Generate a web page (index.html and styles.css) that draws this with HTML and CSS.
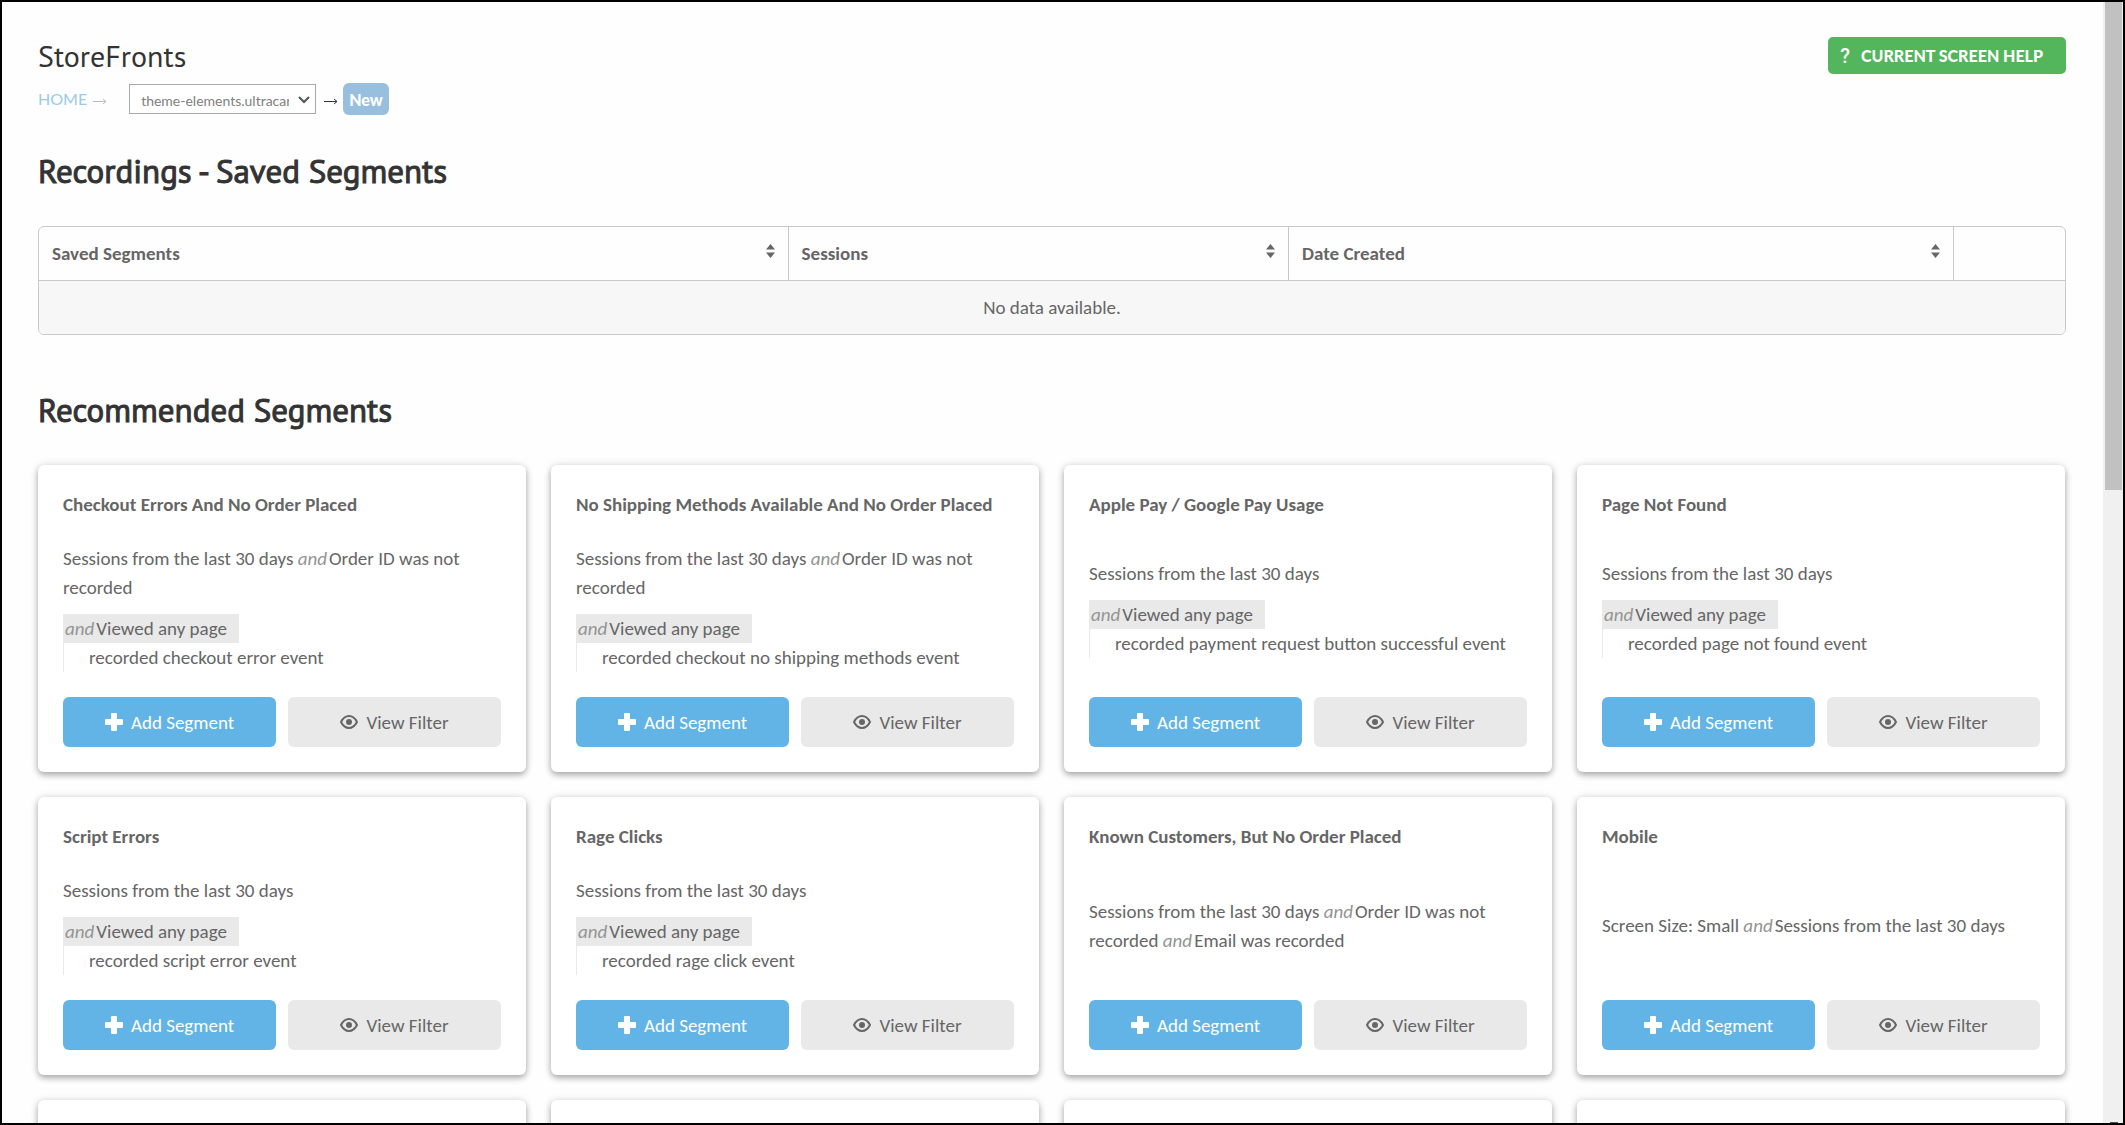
FILE: index.html
```html
<!DOCTYPE html>
<html lang="en">
<head>
<meta charset="utf-8">
<title>StoreFronts</title>
<link rel="stylesheet" href="styles.css">
</head>
<body>
<svg class="sprite" aria-hidden="true">
  <symbol id="plus" viewBox="0 0 18 18"><path d="M7 0h4a1 1 0 0 1 1 1v5h5a1 1 0 0 1 1 1v4a1 1 0 0 1-1 1h-5v5a1 1 0 0 1-1 1H7a1 1 0 0 1-1-1v-5H1a1 1 0 0 1-1-1V7a1 1 0 0 1 1-1h5V1a1 1 0 0 1 1-1z"/></symbol>
  <symbol id="eye" viewBox="0 0 18 14"><path d="M1 7C3 3 5.700 1 9 1s6 2 8 6c-2 4-4.700 6-8 6S3 11 1 7z" fill="none" stroke="currentColor" stroke-width="2" stroke-linejoin="round"/><circle cx="9" cy="7" r="3"/></symbol>
  <symbol id="sort" viewBox="0 0 9 14"><path d="M0 5.500 4.500 0 9 5.500zM0 8.500h9L4.500 14z"/></symbol>
  <symbol id="arrow" viewBox="0 0 14 8"><path d="M0 4.500h13M10 2l3 2.500L10 7" fill="none" stroke="currentColor"/></symbol>
</svg>
<div class="frame">
  <main class="page">
    <header class="top">
      <div>
        <h1 class="page-title">StoreFronts</h1>
        <nav class="crumbs" aria-label="Breadcrumb">
          <a class="crumb-home" href="#">HOME</a>
          <svg class="arrow arrow-light"><use href="#arrow"/></svg>
          <span class="store">
            <select class="store-select" aria-label="StoreFront"><option>theme-elements.ultracartstore.com</option></select>
            <svg class="store-chevron" viewBox="0 0 12 8"><path d="M1 1l5 5 5-5" fill="none" stroke="currentColor" stroke-width="2"/></svg>
          </span>
          <svg class="arrow"><use href="#arrow"/></svg>
          <a class="crumb-new" href="#">New</a>
        </nav>
      </div>
      <button class="help" type="button"><span class="help-mark">?</span>CURRENT SCREEN HELP</button>
    </header>

    <h2 class="section-title">Recordings - Saved Segments</h2>
    <table class="segments">
      <colgroup><col class="col-name"><col class="col-sessions"><col class="col-date"><col></colgroup>
      <thead>
        <tr>
          <th scope="col"><span class="th">Saved Segments<svg class="sort"><use href="#sort"/></svg></span></th>
          <th scope="col"><span class="th">Sessions<svg class="sort"><use href="#sort"/></svg></span></th>
          <th scope="col"><span class="th">Date Created<svg class="sort"><use href="#sort"/></svg></span></th>
          <td></td>
        </tr>
      </thead>
      <tbody><tr><td class="empty" colspan="4">No data available.</td></tr></tbody>
    </table>

    <h2 class="section-title">Recommended Segments</h2>
    <section class="cards">
      <article class="card">
        <h3 class="card-title">Checkout Errors And No Order Placed</h3>
        <div class="card-body">
          <p>Sessions from the last 30 days <em>and</em>Order ID was not recorded</p>
          <div class="event"><p class="event-page"><em>and</em>Viewed any page</p><p class="event-detail">recorded checkout error event</p></div>
        </div>
        <div class="actions"><button class="btn btn-add" type="button"><svg class="plus"><use href="#plus"/></svg>Add Segment</button><button class="btn" type="button"><svg class="eye"><use href="#eye"/></svg>View Filter</button></div>
      </article>
      <article class="card">
        <h3 class="card-title">No Shipping Methods Available And No Order Placed</h3>
        <div class="card-body">
          <p>Sessions from the last 30 days <em>and</em>Order ID was not recorded</p>
          <div class="event"><p class="event-page"><em>and</em>Viewed any page</p><p class="event-detail">recorded checkout no shipping methods event</p></div>
        </div>
        <div class="actions"><button class="btn btn-add" type="button"><svg class="plus"><use href="#plus"/></svg>Add Segment</button><button class="btn" type="button"><svg class="eye"><use href="#eye"/></svg>View Filter</button></div>
      </article>
      <article class="card">
        <h3 class="card-title">Apple Pay / Google Pay Usage</h3>
        <div class="card-body">
          <p>Sessions from the last 30 days</p>
          <div class="event"><p class="event-page"><em>and</em>Viewed any page</p><p class="event-detail">recorded payment request button successful event</p></div>
        </div>
        <div class="actions"><button class="btn btn-add" type="button"><svg class="plus"><use href="#plus"/></svg>Add Segment</button><button class="btn" type="button"><svg class="eye"><use href="#eye"/></svg>View Filter</button></div>
      </article>
      <article class="card">
        <h3 class="card-title">Page Not Found</h3>
        <div class="card-body">
          <p>Sessions from the last 30 days</p>
          <div class="event"><p class="event-page"><em>and</em>Viewed any page</p><p class="event-detail">recorded page not found event</p></div>
        </div>
        <div class="actions"><button class="btn btn-add" type="button"><svg class="plus"><use href="#plus"/></svg>Add Segment</button><button class="btn" type="button"><svg class="eye"><use href="#eye"/></svg>View Filter</button></div>
      </article>
      <article class="card">
        <h3 class="card-title">Script Errors</h3>
        <div class="card-body">
          <p>Sessions from the last 30 days</p>
          <div class="event"><p class="event-page"><em>and</em>Viewed any page</p><p class="event-detail">recorded script error event</p></div>
        </div>
        <div class="actions"><button class="btn btn-add" type="button"><svg class="plus"><use href="#plus"/></svg>Add Segment</button><button class="btn" type="button"><svg class="eye"><use href="#eye"/></svg>View Filter</button></div>
      </article>
      <article class="card">
        <h3 class="card-title">Rage Clicks</h3>
        <div class="card-body">
          <p>Sessions from the last 30 days</p>
          <div class="event"><p class="event-page"><em>and</em>Viewed any page</p><p class="event-detail">recorded rage click event</p></div>
        </div>
        <div class="actions"><button class="btn btn-add" type="button"><svg class="plus"><use href="#plus"/></svg>Add Segment</button><button class="btn" type="button"><svg class="eye"><use href="#eye"/></svg>View Filter</button></div>
      </article>
      <article class="card">
        <h3 class="card-title">Known Customers, But No Order Placed</h3>
        <div class="card-body"><p>Sessions from the last 30 days <em>and</em>Order ID was not recorded <em>and</em>Email was recorded</p></div>
        <div class="actions"><button class="btn btn-add" type="button"><svg class="plus"><use href="#plus"/></svg>Add Segment</button><button class="btn" type="button"><svg class="eye"><use href="#eye"/></svg>View Filter</button></div>
      </article>
      <article class="card">
        <h3 class="card-title">Mobile</h3>
        <div class="card-body"><p>Screen Size: Small <em>and</em>Sessions from the last 30 days</p></div>
        <div class="actions"><button class="btn btn-add" type="button"><svg class="plus"><use href="#plus"/></svg>Add Segment</button><button class="btn" type="button"><svg class="eye"><use href="#eye"/></svg>View Filter</button></div>
      </article>
      <article class="card"></article>
      <article class="card"></article>
      <article class="card"></article>
      <article class="card"></article>
    </section>
  </main>
  <div class="scroll-track" aria-hidden="true"><div class="scroll-thumb"></div><div class="scroll-arrow"></div></div>
</div>
</body>
</html>
```
FILE: styles.css
```css
* { box-sizing: border-box; }

body {
  margin: 0;
  color: #666;
  background: #fefefe;
  font: 19px/29px Carlito, Lato, sans-serif;
}

h1, h2, h3, p { margin: 0; }
svg { flex: none; fill: currentColor; }
.sprite { display: none; }

.frame {
  display: flex;
  height: 100vh;
  overflow: hidden;
  border: 2px solid #000;
}

.page {
  flex: 1;
  min-width: 0;
  padding: 34px 37px 0 36px;
}

.scroll-track {
  display: flex;
  flex-direction: column;
  justify-content: space-between;
  align-items: center;
  width: 20px;
  padding: 0 1px 0 2px;
  background: #f0f0f0;
}
.scroll-thumb { width: 100%; height: 43.5%; background: #c1c1c1; }
.scroll-arrow { width: 8px; height: 1px; background: #505050; }

/* Header */
.top {
  display: flex;
  justify-content: space-between;
  align-items: flex-start;
}
.page-title {
  color: #333;
  font: 400 30px/40px "PT Sans", "Open Sans", sans-serif;
}
.crumbs {
  display: flex;
  align-items: center;
  height: 45px;
}
.crumb-home {
  color: #9bcbe6;
  font: 16px/29px Lato, sans-serif;
  text-decoration: none;
}
.arrow { width: 14px; height: 8px; margin: 4px 5px 0 8px; color: #333; }
.arrow-light { margin: 4px 22px 0 6px; color: #bbb; }
.store { position: relative; display: flex; }
.store-select {
  width: 187px;
  height: 30px;
  padding: 4px 26px 0 11px;
  border: 1px solid #a9a9a9;
  border-radius: 0;
  appearance: none;
  color: #808080;
  background: #fff;
  font: 14px/22px Lato, sans-serif;
}
.store-chevron {
  position: absolute;
  top: 12px;
  right: 6px;
  width: 12px;
  height: 8px;
  color: #555;
}
.crumb-new {
  padding: 2px 6px 1px;
  border-radius: 6px;
  color: #fff;
  background: #98c0de;
  font: 900 16px/29px Lato, sans-serif;
  text-decoration: none;
}
.help {
  display: flex;
  align-items: center;
  height: 37px;
  margin-top: 1px;
  padding: 0 23px 0 12px;
  gap: 11px;
  border: 0;
  border-radius: 5px;
  color: #fff;
  background: #53b55c;
  font: 900 16px/20px Lato, sans-serif;
}
.help-mark { font: 500 20px/20px Roboto, sans-serif; }

.section-title {
  padding: 30px 0 35px;
  color: #333;
  font: 400 33px/40px "PT Sans", "Open Sans", sans-serif;
  -webkit-text-stroke: 1px #333;
}

/* Saved segments table */
.segments {
  width: 100%;
  margin-bottom: 25px;
  border: 1px solid #c8c8c8;
  border-radius: 6px;
  border-spacing: 0;
  table-layout: fixed;
  overflow: hidden;
}
.col-name { width: 37%; }
.col-sessions { width: 24.7%; }
.col-date { width: 32.8%; }
.segments th {
  padding: 12px 13px;
  border-right: 1px solid #c8c8c8;
  text-align: left;
}
.th { display: flex; justify-content: space-between; }
.sort { width: 9px; height: 14px; margin-top: 5px; }
.empty {
  height: 54px;
  padding: 0;
  border-top: 1px solid #c8c8c8;
  background: #f7f7f7;
  text-align: center;
}

/* Recommended segment cards */
.cards {
  display: grid;
  grid-template-columns: repeat(4, minmax(0, 1fr));
  gap: 25px;
  padding-right: 1px;
}
.card {
  display: flex;
  flex-direction: column;
  gap: 25px;
  min-height: 278px;
  padding: 25px;
  border-radius: 6px;
  background: #fff;
  box-shadow: 0 3px 6px rgba(0, 0, 0, .3), 0 0 10px rgba(0, 0, 0, .1);
}
.card-title { font-size: 19px; line-height: 29px; }
.card-body {
  display: flex;
  flex: 1;
  flex-direction: column;
  justify-content: center;
  gap: 12px;
}
.card-body em { margin-right: 2px; color: #949494; }
.event { border-left: 1px solid #e9e9e9; }
.event-page {
  width: fit-content;
  padding: 0 12px 0 1px;
  background: #e9e9e9;
}
.event-detail { padding-left: 25px; }
.actions { display: flex; gap: 12px; }
.btn {
  display: flex;
  flex: 1;
  justify-content: center;
  align-items: center;
  gap: 8px;
  height: 50px;
  padding: 0;
  border: 0;
  border-radius: 6px;
  color: #666;
  background: #e9e9e9;
  font: inherit;
}
.btn-add { color: #fff; background: #61b4e5; }
.plus { width: 18px; height: 18px; }
.eye { width: 18px; height: 14px; }
```
